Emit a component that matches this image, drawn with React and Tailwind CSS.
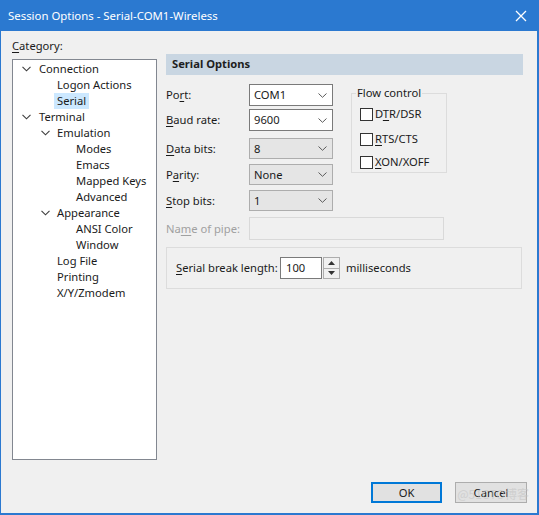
import React from "react";

const Chev = ({ className = "" }) => (
  <svg width="9" height="6" viewBox="0 0 9 6" className={className}>
    <path d="M0.5 0.8 L4.5 4.8 L8.5 0.8" fill="none" stroke="#3c3c3c" strokeWidth="1.1" />
  </svg>
);

const ComboChev = () => (
  <svg width="9" height="5" viewBox="0 0 9 5">
    <path d="M0.5 0.5 L4.5 4.3 L8.5 0.5" fill="none" stroke="#5a5a5a" strokeWidth="1" />
  </svg>
);

const U = ({ children }) => <span className="underline underline-offset-[2px]">{children}</span>;

function TreeItem({ level, text, chevron, selected }) {
  const indent = level === 0 ? "pl-[26px]" : level === 1 ? "pl-[44px]" : "pl-[63px]";
  const chevPos = level === 0 ? "left-[9px]" : "left-[28px]";
  return (
    <div className={`relative h-[16px] leading-[16px] ${indent}`}>
      {chevron && (
        <span className={`absolute top-[5px] ${chevPos}`}>
          <Chev />
        </span>
      )}
      <span className={`inline-block px-[3px] -ml-[3px] ${selected ? "bg-[#cce8ff]" : ""}`}>{text}</span>
    </div>
  );
}

function Combo({ value, enabled, h }) {
  return (
    <div
      className={`w-[84px] ${h} flex items-center justify-between pl-[4px] pr-[5px] border ${
        enabled ? "bg-white border-[#7a7a7a]" : "bg-[#e5e5e5] border-[#adadad]"
      }`}
    >
      <span className="leading-[16px]">{value}</span>
      <ComboChev />
    </div>
  );
}

function Row({ label, value, enabled, h, mt }) {
  return (
    <div className={`flex items-center ${mt}`}>
      <div className="w-[83px] leading-[16px]">{label}</div>
      <Combo value={value} enabled={enabled} h={h} />
    </div>
  );
}

function Check({ label, mt }) {
  return (
    <div className={`flex items-center ${mt}`}>
      <div className="w-[13px] h-[13px] border border-[#333] bg-white" />
      <span className="ml-[2px] leading-[16px]">{label}</span>
    </div>
  );
}

export default function App() {
  return (
    <div className="w-[539px] h-[515px] bg-[#2b79d0] flex flex-col pl-[1px] pr-[2px] pb-[2px] font-['Noto_Sans',sans-serif] text-[11.2px] text-[#1a1a1a] overflow-hidden">
      <div className="h-[31px] flex items-center justify-between pl-[7px] pr-[10px] text-white shrink-0">
        <span className="leading-[16px] text-[11.4px]">Session Options - Serial-COM1-Wireless</span>
        <svg width="12" height="12" viewBox="0 0 12 12">
          <path d="M1 1 L11 11 M11 1 L1 11" stroke="#ffffff" strokeWidth="1.3" />
        </svg>
      </div>
      <div className="flex-1 bg-[#f0f0f0] flex flex-col relative">
        <div className="flex">
          <div className="ml-[11px] pt-[7px] w-[145px]">
            <div className="leading-[16px]">
              <U>C</U>ategory:
            </div>
            <div className="mt-[5px] h-[401px] bg-white border border-[#828790] pt-[1px]">
              <TreeItem level={0} text="Connection" chevron />
              <TreeItem level={1} text="Logon Actions" />
              <TreeItem level={1} text="Serial" selected />
              <TreeItem level={0} text="Terminal" chevron />
              <TreeItem level={1} text="Emulation" chevron />
              <TreeItem level={2} text="Modes" />
              <TreeItem level={2} text="Emacs" />
              <TreeItem level={2} text="Mapped Keys" />
              <TreeItem level={2} text="Advanced" />
              <TreeItem level={1} text="Appearance" chevron />
              <TreeItem level={2} text="ANSI Color" />
              <TreeItem level={2} text="Window" />
              <TreeItem level={1} text="Log File" />
              <TreeItem level={1} text="Printing" />
              <TreeItem level={1} text="X/Y/Zmodem" />
            </div>
          </div>
          <div className="ml-[9px] pt-[23px] w-[357px]">
            <div className="h-[21px] bg-[#c9d6e2] flex items-center pl-[6px] font-bold text-[#1e1e1e]">
              Serial Options
            </div>
            <div className="flex">
              <div className="w-[185px]">
                <Row label={<>Po<U>r</U>t:</>} value="COM1" enabled h="h-[22px]" mt="mt-[9px]" />
                <Row label={<><U>B</U>aud rate:</>} value="9600" enabled h="h-[22px]" mt="mt-[3px]" />
                <Row label={<><U>D</U>ata bits:</>} value="8" h="h-[21px]" mt="mt-[7px]" />
                <Row label={<>P<U>a</U>rity:</>} value="None" h="h-[21px]" mt="mt-[5px]" />
                <Row label={<><U>S</U>top bits:</>} value="1" h="h-[21px]" mt="mt-[5px]" />
              </div>
              <div className="relative mt-[18px] w-[96px] h-[80px] border border-[#dcdcdc] pl-[8px] pt-[12px]">
                <span className="absolute -top-[9px] left-[4px] px-[1px] bg-[#f0f0f0] leading-[16px]">Flow control</span>
                <Check label={<>D<U>T</U>R/DSR</>} />
                <Check label={<><U>R</U>TS/CTS</>} mt="mt-[9px]" />
                <Check label={<><U>X</U>ON/XOFF</>} mt="mt-[7px]" />
              </div>
            </div>
            <div className="flex items-center mt-[6px]">
              <div className="w-[83px] leading-[16px] text-[#a0a0a0] whitespace-nowrap">
                Na<U>m</U>e of pipe:
              </div>
              <div className="w-[195px] h-[23px] border border-[#d9d9d9] bg-[#f0f0f0]" />
            </div>
            <div className="mt-[7px] h-[42px] w-[356px] border border-[#dcdcdc] flex items-center pl-[9px]">
              <span className="w-[104px] leading-[16px] whitespace-nowrap">
                <U>S</U>erial break length:
              </span>
              <div className="w-[42px] h-[22px] bg-white border border-[#7a7a7a] flex items-center pl-[5px] leading-[16px]">
                100
              </div>
              <div className="w-[17px] h-[22px] border border-[#adadad] bg-[#f0f0f0] flex flex-col ml-[1px]">
                <div className="flex-1 flex items-center justify-center border-b border-[#adadad]">
                  <svg width="7" height="4" viewBox="0 0 7 4"><path d="M0 4 L3.5 0 L7 4 Z" fill="#333" /></svg>
                </div>
                <div className="flex-1 flex items-center justify-center">
                  <svg width="7" height="4" viewBox="0 0 7 4"><path d="M0 0 L3.5 4 L7 0 Z" fill="#333" /></svg>
                </div>
              </div>
              <span className="ml-[6px] leading-[16px]">milliseconds</span>
            </div>
          </div>
        </div>
        <div className="flex justify-end mt-[22px] pr-[10px] gap-[13px]">
          <div className="w-[71px] h-[21px] border-2 border-[#0078d7] bg-[#e1e1e1] flex items-center justify-center leading-[16px]">
            OK
          </div>
          <div className="w-[72px] h-[21px] border border-[#adadad] bg-[#e1e1e1] flex items-center justify-center leading-[16px]">
            Cancel
          </div>
        </div>
        <span className="absolute right-[8px] bottom-[10px] text-[12px] text-[#c4c4c4] opacity-60 font-['Noto_Sans_CJK_SC',sans-serif] pointer-events-none">
          @51CTO博客
        </span>
      </div>
    </div>
  );
}
